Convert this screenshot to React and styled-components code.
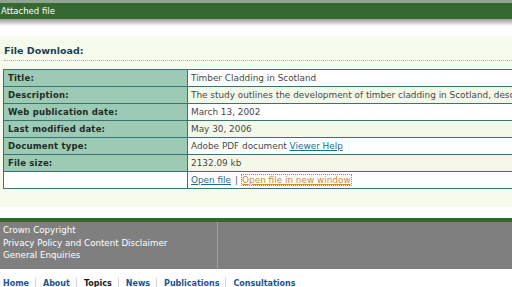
import React from 'react';
import styled, { createGlobalStyle } from 'styled-components';

const GlobalStyle = createGlobalStyle`
  html, body {
    margin: 0;
    padding: 0;
    background: #ffffff;
    overflow: hidden;
  }
  body {
    font-family: "DejaVu Sans", Verdana, sans-serif;
    width: 512px;
    height: 287px;
  }
`;

const Page = styled.div`
  width: 512px;
  height: 287px;
  overflow: hidden;
`;

const TopStrip = styled.div`
  height: 3px;
  background: #8fa58f;
`;

const TitleBar = styled.div`
  height: 16px;
  line-height: 16px;
  background: #356832;
  color: #ffffff;
  font-size: 8.5px;
  padding-left: 1px;
`;

const Shadow = styled.div`
  height: 7px;
  background: linear-gradient(#9a9a9a, #ffffff);
`;

const Gap = styled.div`
  height: ${(p) => p.h}px;
`;

const Panel = styled.div`
  background: #f6fbee;
  padding: 8px 0 18px 0;
`;

const Heading = styled.h2`
  margin: 0 0 0 4px;
  font-size: 9.5px;
  font-weight: bold;
  color: #1d3f52;
  line-height: 14px;
  padding-bottom: 2px;
  border-bottom: 1px dotted #b0b0a8;
`;

const Table = styled.table`
  margin: 8px 0 0 3px;
  border-collapse: collapse;
  table-layout: fixed;
  width: 640px;
  font-size: 8.9px;
`;

const Label = styled.th`
  width: 175px;
  text-align: left;
  font-weight: bold;
  color: #1e2a26;
  background: ${(p) => (p.empty ? '#ffffff' : '#9dcab4')};
  border: 1px solid #3b7272;
  padding: 0 4px;
  height: 16px;
  letter-spacing: 0.2px;
  font-size: 8.5px;
`;

const Value = styled.td`
  text-align: left;
  color: #484848;
  background: ${(p) => (p.alt ? '#f3f9e9' : '#ffffff')};
  border: 1px solid #3b7272;
  padding: 0 3px;
  height: 16px;
  white-space: nowrap;
  overflow: hidden;
`;

const Link = styled.a`
  color: #1f6a8c;
  text-decoration: underline;
`;

const NewWindowLink = styled.a`
  color: #d08a34;
  text-decoration: underline;
  outline: 1px dotted #8a8a8a;
`;

const Sep = styled.span`
  color: #555;
  margin: 0 4px;
`;

const FooterLine = styled.div`
  height: 4px;
  background: #2e6a2c;
`;

const Footer = styled.div`
  height: 47px;
  background: #7f7f7f;
  display: flex;
`;

const FooterLeft = styled.div`
  width: 218px;
  border-right: 1px solid #a0a0a0;
  padding: 2px 0 0 3px;
  box-sizing: border-box;
  display: flex;
  flex-direction: column;
`;

const FooterLink = styled.span`
  color: #ffffff;
  font-size: 8.7px;
  line-height: 12.5px;
  white-space: nowrap;
`;

const Nav = styled.nav`
  display: flex;
  align-items: center;
  padding: 9px 0 0 3px;
  white-space: nowrap;
`;

const NavItem = styled.span`
  font-size: 8px;
  font-weight: bold;
  color: ${(p) => (p.active ? '#1a1a1a' : '#1b5590')};
  padding: 0 6px 0 ${(p) => (p.first ? '0' : '7px')};
  border-left: ${(p) => (p.first ? 'none' : '1px solid #d4d4d4')};
  line-height: 11px;
`;

const rows = [
  ['Title:', 'Timber Cladding in Scotland'],
  ['Description:', 'The study outlines the development of timber cladding in Scotland, describing its history and current use'],
  ['Web publication date:', 'March 13, 2002'],
  ['Last modified date:', 'May 30, 2006'],
  ['Document type:', 'doc'],
  ['File size:', '2132.09 kb'],
];

const navItems = ['Home', 'About', 'Topics', 'News', 'Publications', 'Consultations'];

export default function App() {
  return (
    <>
      <GlobalStyle />
      <Page>
        <TopStrip />
        <TitleBar>Attached file</TitleBar>
        <Shadow />
        <Gap h={10} />
        <Panel>
          <Heading>File Download:</Heading>
          <Table>
            <tbody>
              {rows.map(([label, value], i) => (
                <tr key={label}>
                  <Label>{label}</Label>
                  <Value alt={i % 2 === 1}>
                    {value === 'doc' ? (
                      <>
                        Adobe PDF document <Link href="#">Viewer Help</Link>
                      </>
                    ) : (
                      value
                    )}
                  </Value>
                </tr>
              ))}
              <tr>
                <Label empty />
                <Value>
                  <Link href="#">Open file</Link>
                  <Sep>|</Sep>
                  <NewWindowLink href="#">Open file in new window</NewWindowLink>
                </Value>
              </tr>
            </tbody>
          </Table>
        </Panel>
        <Gap h={11} />
        <FooterLine />
        <Footer>
          <FooterLeft>
            <FooterLink>Crown Copyright</FooterLink>
            <FooterLink>Privacy Policy and Content Disclaimer</FooterLink>
            <FooterLink>General Enquiries</FooterLink>
          </FooterLeft>
        </Footer>
        <Nav>
          {navItems.map((n, i) => (
            <NavItem key={n} first={i === 0} active={n === 'Topics'}>
              {n}
            </NavItem>
          ))}
        </Nav>
      </Page>
    </>
  );
}
